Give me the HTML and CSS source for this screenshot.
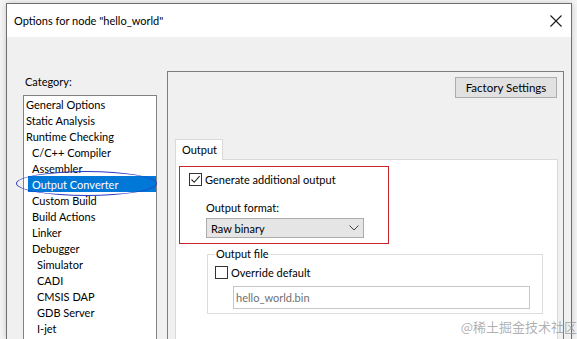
FILE: index.html
```html
<!DOCTYPE html>
<html lang="en">
<head>
  <meta charset="UTF-8">
  <title>Options for node "hello_world"</title>
  <link rel="stylesheet" href="styles.css">
</head>
<body>

  <div class="window">
    <!-- Title bar -->
    <div class="titlebar">
      <span class="title">Options for node "hello_world"</span>
      <svg class="close" width="12" height="12" viewBox="0 0 12 12">
        <path d="M0.5 0.5 L11.5 11.5 M11.5 0.5 L0.5 11.5" stroke="#1a1a1a" stroke-width="1.1" fill="none"/>
      </svg>
    </div>

    <div class="content">
      <!-- Category column -->
      <div class="category">
        <div class="category-label">Category:</div>
        <div class="listbox">
          <div class="item">General Options</div>
          <div class="item">Static Analysis</div>
          <div class="item">Runtime Checking</div>
          <div class="item sub">C/C++ Compiler</div>
          <div class="item sub">Assembler</div>
          <div class="item sub selected">Output Converter<span class="mark"></span></div>
          <div class="item sub">Custom Build</div>
          <div class="item sub">Build Actions</div>
          <div class="item sub">Linker</div>
          <div class="item sub">Debugger</div>
          <div class="item sub2">Simulator</div>
          <div class="item sub2">CADI</div>
          <div class="item sub2">CMSIS DAP</div>
          <div class="item sub2">GDB Server</div>
          <div class="item sub2">I-jet</div>
        </div>
      </div>

      <!-- Settings panel -->
      <div class="panel">
        <div class="panel-top">
          <button class="btn">Factory Settings</button>
        </div>

        <div class="tabs">
          <div class="tab">Output</div>
        </div>
        <div class="tab-page">
          <div class="highlight-box">
            <label class="check-row">
              <span class="checkbox">
                <svg width="11" height="11" viewBox="0 0 11 11">
                  <path d="M1.5 5.5 L4.2 8.3 L9.6 2.2" stroke="#262626" stroke-width="1.1" fill="none"/>
                </svg>
              </span>
              Generate additional output
            </label>
            <div class="field-label">Output format:</div>
            <div class="select">
              <span>Raw binary</span>
              <svg width="10" height="6" viewBox="0 0 10 6">
                <path d="M0.5 0.5 L5 5 L9.5 0.5" stroke="#444" stroke-width="1" fill="none"/>
              </svg>
            </div>
          </div>

          <fieldset class="group">
            <legend>Output file</legend>
            <label class="check-row">
              <span class="checkbox"></span>
              Override default
            </label>
            <div class="textbox">hello_world.bin</div>
          </fieldset>
        </div>
      </div>
    </div>
  </div>

  <div class="watermark">@稀土掘金技术社区</div>

</body>
</html>
```

FILE: styles.css
```css
/* Page and window frame */
body {
  margin: 0;
  height: 339px;
  overflow: hidden;
  background-color: #f4f4f4;
  font-family: "Lato", "Noto Sans", sans-serif;
  font-size: 11px;
  color: #000;
  padding: 3px 5px 0 6px;
  box-sizing: border-box;
  position: relative;
}

.window {
  height: 336px;
  overflow: hidden;
  border: 1px solid #6f6f6f;
  border-bottom: none;
  box-sizing: border-box;
  background-color: #f0f0f0;
  box-shadow: 0 0 6px rgba(0, 0, 0, 0.18);
  display: flex;
  flex-direction: column;
}

.titlebar {
  flex-shrink: 0;
  height: 33px;
  background-color: #fff;
  display: flex;
  align-items: center;
  justify-content: space-between;
  padding: 0 9px 0 7px;
  font-size: 11px;
}

.content {
  display: flex;
  padding: 0 7px 0 16px;
}

/* Category list */
.category {
  width: 134px;
  margin-right: 10px;
  flex-shrink: 0;
}

.category-label {
  margin-top: 37px;
  height: 16px;
  line-height: 16px;
  padding-left: 2px;
}

.listbox {
  margin-top: 5px;
  height: 260px;
  background-color: #fff;
  border: 1px solid #828282;
  position: relative;
}

.item {
  height: 16px;
  line-height: 17px;
  padding-left: 2px;
  white-space: nowrap;
  position: relative;
}

.item.sub {
  padding-left: 8px;
}

.item.sub2 {
  padding-left: 13px;
}

.item.selected {
  background-color: #0078d7;
  color: #fff;
  margin-left: 4px;
  padding-left: 4px;
}

/* hand-drawn ellipse around the selected item */
.mark {
  position: absolute;
  left: -12px;
  top: -5px;
  width: 139px;
  height: 23px;
  border: 1px solid #2a3bc6;
  border-radius: 50%;
}

/* Right panel */
.panel {
  flex: 1;
  margin-top: 34px;
  height: 290px;
  border: 1px solid #7d7d7d;
  padding: 5px 5px 0 7px;
}

.panel-top {
  display: flex;
  justify-content: flex-end;
}

.btn {
  width: 102px;
  height: 21px;
  background-color: #e1e1e1;
  border: 1px solid #adadad;
  font-family: inherit;
  font-size: 11.5px;
  padding: 0;
  margin-right: 1px;
}

.tabs {
  display: flex;
  margin-top: 41px;
}

.tab {
  width: 48px;
  height: 21px;
  line-height: 20px;
  padding-left: 6px;
  box-sizing: border-box;
  background-color: #fff;
  border: 1px solid #d9d9d9;
  border-bottom: none;
  margin-bottom: -1px;
  position: relative;
}

.tab-page {
  background-color: #fff;
  border: 1px solid #d9d9d9;
  height: 200px;
  padding: 6px 0 0 3px;
}

/* Red annotated area */
.highlight-box {
  width: 199px;
  height: 70px;
  border: 1px solid #c8232c;
  padding: 6px 0 0 9px;
}

.check-row {
  display: flex;
  align-items: center;
  height: 13px;
  white-space: nowrap;
}

.checkbox {
  width: 11px;
  height: 11px;
  border: 1px solid #333;
  background-color: #fff;
  margin-right: 3px;
  display: flex;
}

.field-label {
  margin: 15px 0 0 17px;
  height: 14px;
  line-height: 14px;
}

.select {
  margin: 3px 0 0 17px;
  width: 148px;
  height: 18px;
  background-color: #e5e5e5;
  border: 1px solid #acacac;
  display: flex;
  align-items: center;
  justify-content: space-between;
  padding: 0 4px;
}

/* Output file group */
.group {
  margin: 4px 0 0 28px;
  width: 336px;
  height: 66px;
  border: 1px solid #dcdcdc;
  padding: 6px 0 0 7px;
  box-sizing: border-box;
  min-width: 0;
}

.group legend {
  padding: 0 1px;
  line-height: 12px;
}

.textbox {
  margin: 7px 0 0 18px;
  width: 293px;
  height: 21px;
  border: 1px solid #c6c6c6;
  color: #707070;
  line-height: 21px;
  padding-left: 2px;
}

.watermark {
  position: absolute;
  right: 0;
  bottom: 3px;
  font-family: "Noto Sans CJK SC", sans-serif;
  font-size: 13px;
  color: rgba(150, 150, 150, 0.75);
}
```
